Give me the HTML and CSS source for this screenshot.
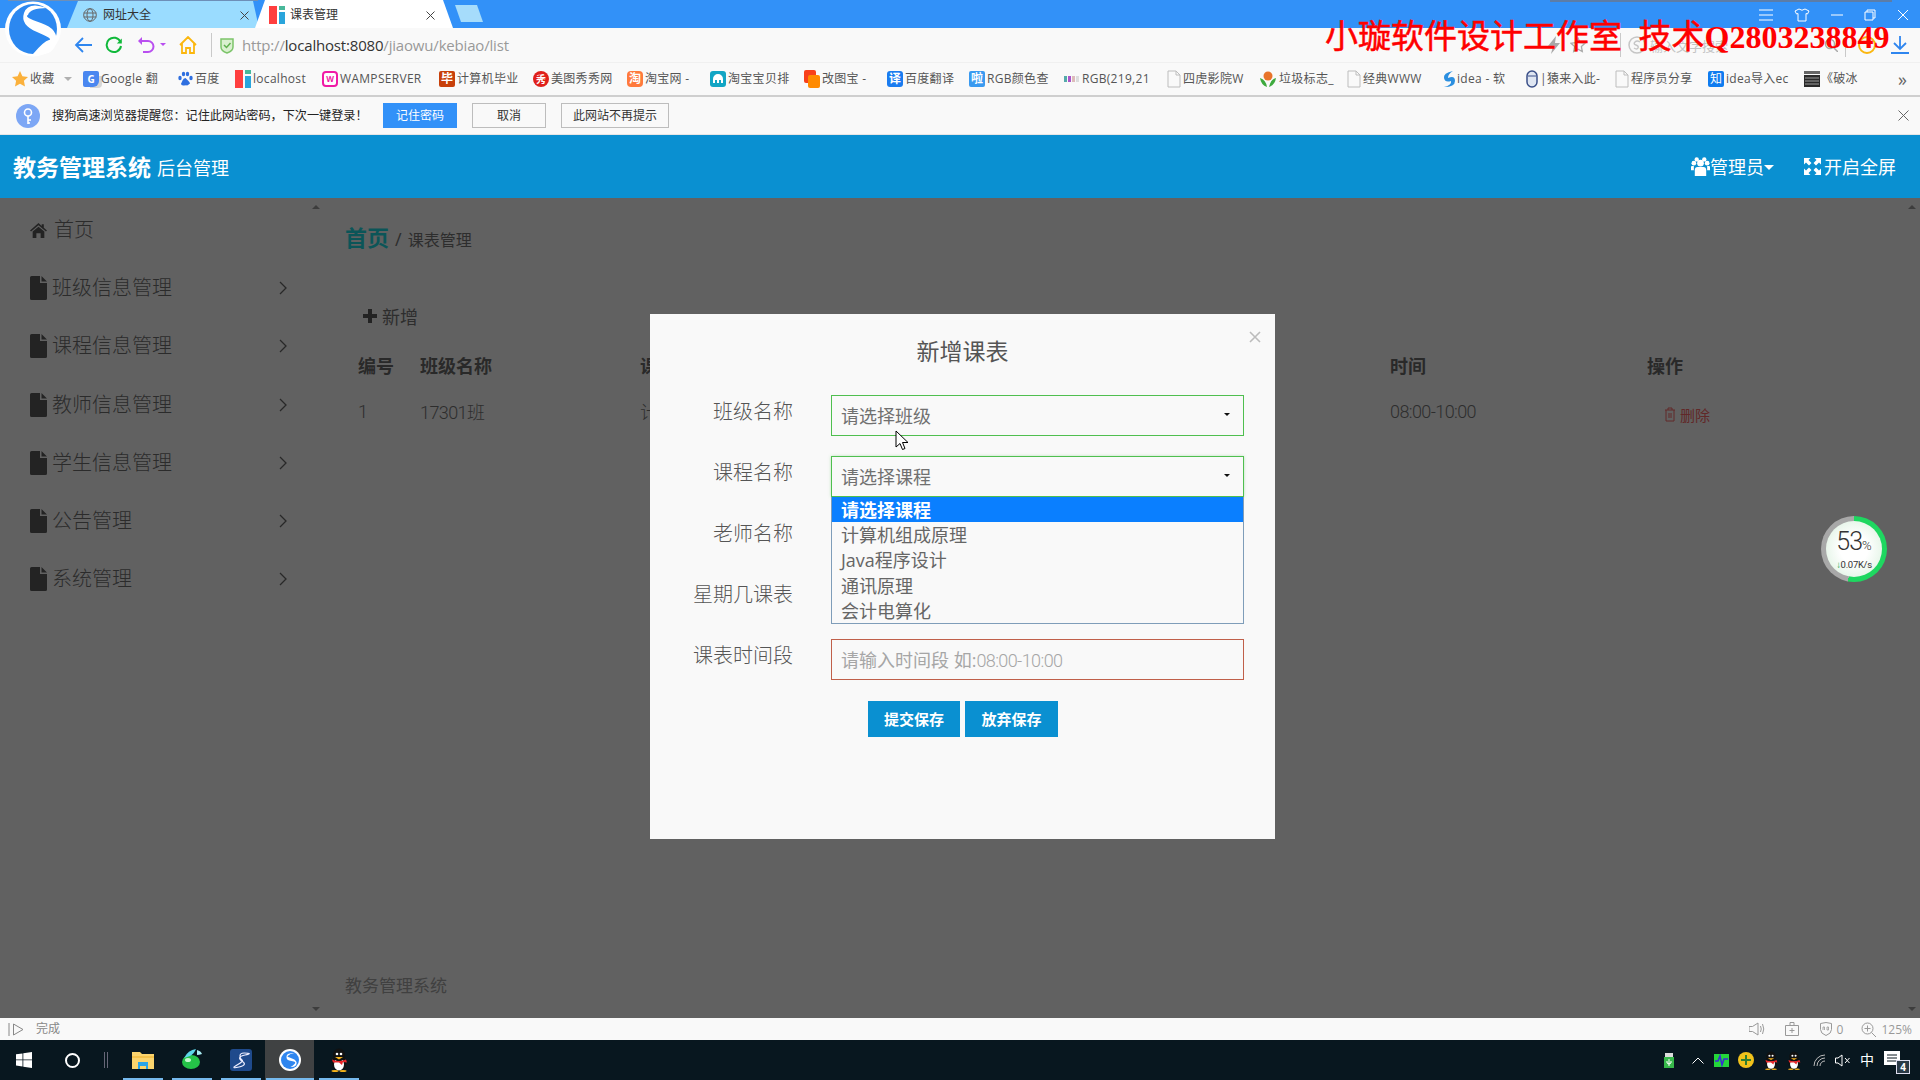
FILE: index.html
```html
<!DOCTYPE html>
<html lang="zh-CN">
<head>
<meta charset="utf-8">
<title>课表管理</title>
<link rel="stylesheet" href="styles.css">
</head>
<body>
<svg class="defs" width="0" height="0">
  <symbol id="lh" viewBox="0 0 16 18"><rect width="8" height="18" fill="#ff3f3f"/><rect x="10" y="6" width="6" height="12" fill="#2aa5dc"/><rect x="10" width="6" height="4" fill="#48b89a"/></symbol>
  <symbol id="doc" viewBox="0 0 14 18"><path d="M1 1h8l4 4v12H1z M9 1v4h4" fill="none" stroke="#bdbdbd"/></symbol>
  <symbol id="file" viewBox="0 0 17 24"><path d="M1.5 0H10v7h7v15.500a1.500 1.500 0 0 1-1.500 1.500h-14A1.500 1.500 0 0 1 0 22.500V1.500A1.500 1.500 0 0 1 1.500 0zM11.500 0 17 5.500h-5.500z" fill="#5e5e5e"/></symbol>
  <symbol id="chev" viewBox="0 0 8 14"><path d="M1 1l6 6-6 6" fill="none" stroke="#6a6a6a" stroke-width="1.300"/></symbol>
  <symbol id="qq" viewBox="0 0 20 24"><ellipse cx="10" cy="15" rx="7" ry="8" fill="#111"/><ellipse cx="10" cy="16.500" rx="5" ry="6" fill="#fff"/><ellipse cx="10" cy="7" rx="6" ry="6.500" fill="#111"/><circle cx="8" cy="6" r="1.300" fill="#fff"/><circle cx="12" cy="6" r="1.300" fill="#fff"/><path d="M6 9h8l-4 2.500z" fill="#f6b31a"/><path d="M3 11.500q7 3 14 0l1 3-4-.5-1 3-3-2.500-6 0z" fill="#e8262a"/><ellipse cx="6" cy="23" rx="3.500" ry="1" fill="#f6b31a"/><ellipse cx="14" cy="23" rx="3.500" ry="1" fill="#f6b31a"/></symbol>
</svg>
<div class="window">

  <div class="tabbar">
    <div class="tab tab-back">
      <svg class="tab-ico" width="14" height="14" viewBox="0 0 14 14"><g fill="none" stroke="#666"><circle cx="7" cy="7" r="6.300"/><ellipse cx="7" cy="7" rx="3" ry="6.300"/><path d="M.7 5h12.600M.7 9h12.600"/></g></svg>
      <span class="tab-title">网址大全</span>
      <svg class="tab-x" width="9" height="9" viewBox="0 0 9 9"><path d="M.5.500l8 8M8.500.500l-8 8" stroke="#444"/></svg>
    </div>
    <div class="tab tab-active">
      <svg class="tab-ico" width="16" height="18"><use href="#lh"/></svg>
      <span class="tab-title">课表管理</span>
      <svg class="tab-x" width="9" height="9" viewBox="0 0 9 9"><path d="M.5.500l8 8M8.500.500l-8 8" stroke="#444"/></svg>
    </div>
    <div class="tab-new"></div>
    <div class="win-ctrl">
      <svg width="14" height="12" viewBox="0 0 14 12"><path d="M0 1h14M0 6h14M0 11h14" stroke="#fff"/></svg>
      <svg width="16" height="14" viewBox="0 0 16 14"><path d="M5 1 1 3l1.500 3L4 5.500V13h8V5.500L13.500 6 15 3l-4-2q-3 2.500-6 0z" fill="none" stroke="#fff"/></svg>
      <svg width="12" height="12" viewBox="0 0 12 12"><path d="M0 6h12" stroke="#fff"/></svg>
      <svg width="12" height="12" viewBox="0 0 12 12"><path d="M3 3V1h8v8H9M1 3h8v8H1z" fill="none" stroke="#fff"/></svg>
      <svg width="12" height="12" viewBox="0 0 12 12"><path d="M1 1l10 10M11 1 1 11" stroke="#fff"/></svg>
    </div>
  </div>

  <div class="addrbar">
    <svg class="nav-back" width="18" height="18" viewBox="0 0 18 18"><path d="M9 2 2 9l7 7M2 9h16" fill="none" stroke="#2f86ef" stroke-width="1.800"/></svg>
    <svg class="nav-reload" width="18" height="18" viewBox="0 0 18 18"><path d="M15.500 6A7.200 7.200 0 1 0 16 10" fill="none" stroke="#10b93a" stroke-width="2"/><path d="M16.800 2.500v5h-5z" fill="#10b93a"/></svg>
    <svg class="nav-undo" width="33" height="18" viewBox="0 0 33 18"><path d="M4 5h7a5.500 5.500 0 0 1 0 11H6" fill="none" stroke="#b94ff0" stroke-width="2"/><path d="M5 1v8L1 5z" fill="#b94ff0"/><path d="M23 7h6l-3 3z" fill="#b94ff0"/></svg>
    <svg class="nav-home" width="18" height="18" viewBox="0 0 18 18"><path d="M1 9l8-8 8 8M3 7.500V17h4v-5h4v5h4V7.500" fill="none" stroke="#fbb70f" stroke-width="1.800"/></svg>
    <span class="addr-div"></span>
    <svg class="nav-shield" width="14" height="17" viewBox="0 0 14 17"><path d="M1 2h12v8q0 4-6 6-6-2-6-6z" fill="#d9f0cf" stroke="#7cc46a" stroke-width="1.500"/><path d="M4 8l2.500 2.500L10.500 6" fill="none" stroke="#5fb04e" stroke-width="1.500"/></svg>
    <span class="url">http://<b class="url-host">localhost:8080</b>/jiaowu/kebiao/list</span>
    <svg class="nav-bolt" width="14" height="18" viewBox="0 0 14 18"><path d="M9 0 1 10h5l-2 8 9-11H8z" fill="#a8a8a8"/></svg>
    <svg class="nav-star" width="16" height="16" viewBox="0 0 16 16"><path d="M8 1l2.100 4.600 4.900.6-3.600 3.400.9 5L8 12.200 3.700 14.600l.9-5L1 6.200l4.900-.6z" fill="none" stroke="#aaa" stroke-width="1.300"/></svg>
    <span class="addr-div addr-div-search"></span>
    <div class="search">
      <svg width="18" height="18" viewBox="0 0 18 18"><circle cx="9" cy="9" r="8" fill="none" stroke="#c6c6c6" stroke-width="1.500"/><path d="M12 6q-3-2-5 0t1 3 2 3-4 0" fill="none" stroke="#c6c6c6" stroke-width="1.500"/></svg>
      <span class="search-text">输入文字搜索</span>
    </div>
    <svg class="nav-mag" width="14" height="14" viewBox="0 0 14 14"><circle cx="6" cy="6" r="4.500" fill="none" stroke="#aaa" stroke-width="1.500"/><path d="M9.500 9.500 14 14" stroke="#aaa" stroke-width="1.500"/></svg>
    <span class="addr-div addr-div-end"></span>
    <span class="coin"></span>
    <svg class="nav-dl" width="18" height="18" viewBox="0 0 18 18"><path d="M9 0v12M3 7l6 6 6-6M0 17h18" fill="none" stroke="#2f86ef" stroke-width="1.800"/></svg>
  </div>

  <div class="bookmarks">
    <a class="bm"><svg width="16" height="16" viewBox="0 0 16 16"><path d="M8 0l2.400 5.200 5.600.7-4.100 3.900 1.100 5.700L8 12.700 3 15.500l1.100-5.700L0 5.900l5.600-.7z" fill="#fbb13c"/></svg><span class="bm-t">收藏</span><span class="bm-caret"></span></a>
    <a class="bm"><span class="fav fav-g">G</span><span class="bm-t">Google 翻</span></a>
    <a class="bm"><svg width="15" height="16" viewBox="0 0 15 16" fill="#2f6fe0"><ellipse cx="2" cy="7" rx="1.700" ry="2.300"/><ellipse cx="5.500" cy="3" rx="1.700" ry="2.300"/><ellipse cx="9.500" cy="3" rx="1.700" ry="2.300"/><ellipse cx="13" cy="7" rx="1.700" ry="2.300"/><path d="M7.500 7q-2 0-3 2.500t-1.500 3q0 2.500 3 2t3 0 3-2q0-1-1.500-2.500T7.500 7z"/></svg><span class="bm-t">百度</span></a>
    <a class="bm"><svg width="16" height="18"><use href="#lh"/></svg><span class="bm-t">localhost</span></a>
    <a class="bm"><span class="fav fav-w">W</span><span class="bm-t">WAMPSERVER</span></a>
    <a class="bm"><span class="fav fav-bi">毕</span><span class="bm-t">计算机毕业</span></a>
    <a class="bm"><span class="fav fav-xiu">秀</span><span class="bm-t">美图秀秀网</span></a>
    <a class="bm"><span class="fav fav-tao">淘</span><span class="bm-t">淘宝网 -</span></a>
    <a class="bm"><svg width="16" height="16" viewBox="0 0 16 16"><rect width="16" height="16" rx="3" fill="#12a5c4"/><path d="M3 12V8a5 5 0 0 1 10 0v4h-2V9H9v3H7V9H5v3z" fill="#fff"/></svg><span class="bm-t">淘宝宝贝排</span></a>
    <a class="bm"><svg width="16" height="18" viewBox="0 0 16 18"><rect width="12" height="13" rx="2" fill="#f8401a"/><rect x="4" y="5" width="12" height="13" rx="2" fill="#ff8a00"/></svg><span class="bm-t">改图宝 -</span></a>
    <a class="bm"><span class="fav fav-yi">译</span><span class="bm-t">百度翻译</span></a>
    <a class="bm"><span class="fav fav-la">啦</span><span class="bm-t">RGB颜色查</span></a>
    <a class="bm"><svg width="16" height="6" viewBox="0 0 16 6"><rect width="3" height="6" fill="#5aa"/><rect x="4" width="3" height="6" fill="#a5c"/><rect x="8" width="3" height="6" fill="#dbb"/><rect x="12" width="3" height="6" fill="#ddd"/></svg><span class="bm-t">RGB(219,21</span></a>
    <a class="bm"><svg width="14" height="18"><use href="#doc"/></svg><span class="bm-t">四虎影院W</span></a>
    <a class="bm"><svg width="18" height="18" viewBox="0 0 18 18"><circle cx="9" cy="6" r="4.500" fill="#e8742a"/><path d="M1 8q1 7 7 9-1-7-7-9zM17 8q-1 7-7 9 1-7 7-9z" fill="#3eaa3e"/></svg><span class="bm-t">垃圾标志_</span></a>
    <a class="bm"><svg width="14" height="18"><use href="#doc"/></svg><span class="bm-t">经典WWW</span></a>
    <a class="bm"><svg width="14" height="18" viewBox="0 0 14 18"><path d="M12 1Q2 3 3 8t7 3q1 4-7 6 11 0 11-6t-7-3q0-4 5-7z" fill="#2b8fe0"/></svg><span class="bm-t">idea - 软</span></a>
    <a class="bm"><svg width="12" height="18" viewBox="0 0 12 18"><rect x="1" y="1" width="10" height="16" rx="5" fill="#dfe6f2" stroke="#3a4f88" stroke-width="1.500"/><path d="M2 6h8" stroke="#3a4f88"/></svg><span class="bm-t">|猿来入此-</span></a>
    <a class="bm"><svg width="14" height="18"><use href="#doc"/></svg><span class="bm-t">程序员分享</span></a>
    <a class="bm"><span class="fav fav-zhi">知</span><span class="bm-t">idea导入ec</span></a>
    <a class="bm"><svg width="16" height="16" viewBox="0 0 16 16"><rect y="4" width="16" height="12" fill="#2a2a2a"/><rect y="0" width="16" height="3" fill="#666"/><path d="M1 7h14M1 10h14M1 13h14" stroke="#bbb" stroke-width=".8"/></svg><span class="bm-t bm-t-wide">《破冰</span></a>
    <a class="bm bm-more">»</a>
  </div>

  <div class="notify">
    <svg class="notify-ico" width="24" height="24" viewBox="0 0 24 24"><circle cx="12" cy="12" r="12" fill="#7da7f5"/><circle cx="12" cy="8.500" r="3.500" fill="none" stroke="#fff" stroke-width="1.600"/><path d="M12 12v8M12 16h3M12 19h2" stroke="#fff" stroke-width="1.600"/></svg>
    <span class="notify-text">搜狗高速浏览器提醒您：记住此网站密码，下次一键登录！</span>
    <button class="nb nb-primary">记住密码</button>
    <button class="nb nb-cancel">取消</button>
    <button class="nb nb-never">此网站不再提示</button>
    <svg class="notify-x" width="11" height="11" viewBox="0 0 11 11"><path d="M.5.500l10 10M10.500.500l-10 10" stroke="#666"/></svg>
  </div>

  <header class="apphead">
    <span class="brand">教务管理系统</span>
    <span class="brand-sub">后台管理</span>
    <div class="head-right">
      <svg class="ico-users" width="19" height="19" viewBox="0 0 20 20" fill="#fff"><circle cx="3" cy="6.500" r="2.500"/><circle cx="17" cy="6.500" r="2.500"/><circle cx="6" cy="2.500" r="2.300"/><circle cx="14" cy="2.500" r="2.300"/><circle cx="10" cy="6.500" r="3.500"/><path d="M4 20v-6q0-3.500 3-3.500h6q3 0 3 3.500v6z"/><path d="M0 14v-3.500q0-1 1-1h2V14zM20 14v-3.500q0-1-1-1h-2V14z"/></svg>
      <span class="head-link">管理员</span>
      <span class="head-caret"></span>
      <svg class="ico-full" width="17" height="17" viewBox="0 0 17 17" fill="#fff"><path d="M0 0h6.500L4.500 2l3 3L5 7.500l-3-3-2 2zM17 0v6.500l-2-2-3 3L9.500 5l3-3-2-2zM17 17h-6.500l2-2-3-3L12 9.500l3 3 2-2zM0 17v-6.500l2 2 3-3L7.500 12l-3 3 2 2z"/></svg>
      <span class="head-link">开启全屏</span>
    </div>
  </header>

  <div class="main">
    <aside class="sidebar">
      <a class="menu-item menu-home">
        <svg width="17" height="15" viewBox="0 0 16 14"><path d="M8 0 0 7l1 1 7-6 7 6 1-1-3-2.600V1h-2v1.700zM2.500 8 8 3.500 13.500 8v6H10V9.500H6V14H2.500z" fill="#5e5e5e"/></svg>
        <span class="menu-text">首页</span>
      </a>
      <a class="menu-item"><svg width="17" height="24"><use href="#file"/></svg><span class="menu-text">班级信息管理</span><svg class="chev" width="8" height="14"><use href="#chev"/></svg></a>
      <a class="menu-item"><svg width="17" height="24"><use href="#file"/></svg><span class="menu-text">课程信息管理</span><svg class="chev" width="8" height="14"><use href="#chev"/></svg></a>
      <a class="menu-item"><svg width="17" height="24"><use href="#file"/></svg><span class="menu-text">教师信息管理</span><svg class="chev" width="8" height="14"><use href="#chev"/></svg></a>
      <a class="menu-item"><svg width="17" height="24"><use href="#file"/></svg><span class="menu-text">学生信息管理</span><svg class="chev" width="8" height="14"><use href="#chev"/></svg></a>
      <a class="menu-item"><svg width="17" height="24"><use href="#file"/></svg><span class="menu-text">公告管理</span><svg class="chev" width="8" height="14"><use href="#chev"/></svg></a>
      <a class="menu-item"><svg width="17" height="24"><use href="#file"/></svg><span class="menu-text">系统管理</span><svg class="chev" width="8" height="14"><use href="#chev"/></svg></a>
    </aside>
    <div class="scrollbar"><span class="sb-up"></span><span class="sb-down"></span></div>

    <section class="content">
      <div class="crumb"><b class="crumb-home">首页</b><span class="crumb-sep">/</span><span class="crumb-cur">课表管理</span></div>
      <div class="add">
        <svg width="14" height="14" viewBox="0 0 14 14"><path d="M5 0h4v5h5v4H9v5H5V9H0V5h5z" fill="#5e5e5e"/></svg>
        <span>新增</span>
      </div>
      <table class="grid">
        <colgroup><col class="c-id"><col class="c-class"><col class="c-course"><col class="c-time"><col class="c-op"></colgroup>
        <thead><tr><th>编号</th><th>班级名称</th><th>课程名称</th><th>时间</th><th>操作</th></tr></thead>
        <tbody><tr>
          <td>1</td><td>17301班</td><td>计算机组成原理</td><td>08:00-10:00</td>
          <td><span class="del"><svg width="12" height="15" viewBox="0 0 12 15"><path d="M1 3h10M4 3V1h4v2M2 3v11h8V3M5 6v5M7 6v5" fill="none" stroke="#ff6a6a"/></svg>删除</span></td>
        </tr></tbody>
      </table>
      <footer class="foot">教务管理系统</footer>
    </section>
    <div class="scrollbar"><span class="sb-up"></span><span class="sb-down"></span></div>

    <div class="backdrop"></div>

    <div class="modal">
      <svg class="modal-x" width="12" height="12" viewBox="0 0 12 12"><path d="M1 1l10 10M11 1 1 11" stroke="#bcbcbc" stroke-width="1.600"/></svg>
      <h2 class="modal-title">新增课表</h2>
      <div class="form">
        <label class="lab">班级名称</label>
        <div class="sel"><span>请选择班级</span><i class="sel-caret"></i></div>
        <label class="lab">课程名称</label>
        <div class="sel sel-open"><span>请选择课程</span><i class="sel-caret"></i>
          <ul class="drop">
            <li class="opt opt-on">请选择课程</li>
            <li class="opt">计算机组成原理</li>
            <li class="opt">Java程序设计</li>
            <li class="opt">通讯原理</li>
            <li class="opt">会计电算化</li>
          </ul>
        </div>
        <label class="lab">老师名称</label>
        <div class="sel"></div>
        <label class="lab">星期几课表</label>
        <div class="sel"></div>
        <label class="lab">课表时间段</label>
        <div class="inp"><span>请输入时间段 如:<span class="ph-num">08:00-10:00</span></span></div>
      </div>
      <div class="actions">
        <button class="btn btn-a">提交保存</button>
        <button class="btn btn-b">放弃保存</button>
      </div>
    </div>

    <svg class="cursor" width="14" height="21" viewBox="0 0 14 21"><path d="M1 1v16l4-3.500 2.500 6 2.500-1-2.500-6H13z" fill="#fff" stroke="#000"/></svg>

    <div class="speed">
      <div class="speed-in">
        <div class="speed-pct">53<small>%</small></div>
        <div class="speed-net"><i class="speed-arr">↓</i>0.07K/s</div>
      </div>
    </div>
  </div>

  <div class="status">
    <svg class="st-play" width="16" height="13" viewBox="0 0 16 13"><path d="M1 0v13M5.500 1v11L15 6.500z" fill="none" stroke="#888"/></svg>
    <span class="st-text">完成</span>
    <div class="st-right">
      <svg width="16" height="14" viewBox="0 0 16 14"><path d="M0 4.500h3.500L9 1v12L3.500 9.500H0zM11.500 4q1.500 3 0 6M13.500 2q2.500 5 0 10" fill="none" stroke="#999"/></svg>
      <svg width="14" height="14" viewBox="0 0 14 14"><path d="M.5 3.500h13v10H.5zM5 3.500v-3h4v3M7 6v5M4.500 8.500h5" fill="none" stroke="#999"/></svg>
      <span class="st-ad"><svg width="12" height="14" viewBox="0 0 12 14"><path d="M.5 1.500 6 .5l5.500 1v6q0 4-5.500 6-5.500-2-5.500-6z" fill="none" stroke="#999"/><path d="M3 8V5h1.500v3M7 5v3h1.500V5z" fill="none" stroke="#999" stroke-width=".8"/></svg><span>0</span></span>
      <span class="st-zoom"><svg width="15" height="15" viewBox="0 0 15 15"><circle cx="6.500" cy="6.500" r="5.500" fill="none" stroke="#999"/><path d="M3.500 6.500h6M6.500 3.500v6M10.500 10.500 15 15" stroke="#999"/></svg><span>125%</span></span>
    </div>
  </div>

  <div class="taskbar">
    <div class="tb-start"><svg width="16" height="16" viewBox="0 0 16 16" fill="#fff"><path d="M0 2.300 6.500 1.400v6.100H0zM7.300 1.300 16 0v7.500H7.300zM0 8.300h6.500v6.200L0 13.600zM7.300 8.300H16V16l-8.700-1.300z"/></svg></div>
    <div class="tb-cortana"><span class="ring"></span></div>
    <div class="tb-sep"></div>
    <div class="tb-app tb-run"><svg width="22" height="20" viewBox="0 0 22 20"><path d="M0 2h8l2 2h12v15H0z" fill="#fbd46d"/><path d="M0 6h22v2H0z" fill="#f5c24a"/><path d="M6 12h10v7h-2v-3H8v3H6z" fill="#2aa4e8"/></svg></div>
    <div class="tb-app tb-run"><svg width="24" height="24" viewBox="0 0 24 24"><ellipse cx="11" cy="14" rx="9" ry="7" fill="#25c348"/><path d="M4 10Q8 2 16 1q-2 5-6 7z" fill="#5ed6e8"/><path d="M17 2q4 1 5 4-3 1-5 1z" fill="#a8ebf2"/><ellipse cx="8" cy="12" rx="3" ry="2" fill="#c5f7cf"/></svg></div>
    <div class="tb-app tb-run"><svg width="22" height="22" viewBox="0 0 22 22"><rect width="22" height="22" rx="3" fill="#1f4a8c"/><path d="M14 4q-4 0-4 3t2 4-5 5 2 2 3-6 3-6-1-2z" fill="none" stroke="#eef" stroke-width="1.200"/></svg></div>
    <div class="tb-app tb-run tb-active"><svg width="22" height="22" viewBox="0 0 22 22"><circle cx="11" cy="11" r="11" fill="#fff"/><circle cx="11" cy="11" r="9" fill="#2f86ef"/><path d="M15.500 4.500Q8 3.500 7.500 7.500t5 4.500 3 3-4 3q5 .5 6-3t-4.500-5.500-4.500-2.500 3-2z" fill="#fff"/></svg></div>
    <div class="tb-app tb-run"><svg width="20" height="24"><use href="#qq"/></svg></div>
    <div class="tray">
      <svg class="t-usb" width="10" height="15" viewBox="0 0 10 15"><rect y="4" width="10" height="11" fill="#37b84a"/><rect x="1" width="8" height="4" fill="#ddd"/><path d="M5 6v7M3 8v2l2 1 2-1V8" fill="none" stroke="#fff"/></svg>
      <svg class="t-up" width="12" height="7" viewBox="0 0 12 7"><path d="M.5 6.500 6 1l5.500 5.500" fill="none" stroke="#fff"/></svg>
      <svg class="t-item" width="15" height="13" viewBox="0 0 15 13"><rect width="15" height="13" fill="#24d63a"/><path d="M1 7h3l2-5 2 9 2-6h4" fill="none" stroke="#3a2ad6" stroke-width="1.500"/></svg>
      <svg class="t-item" width="16" height="16" viewBox="0 0 16 16"><circle cx="8" cy="8" r="8" fill="#f1c21b"/><path d="M7 3h2v4h4v2H9v4H7V9H3V7h4z" fill="#2f7d2f"/></svg>
      <svg class="t-qq" width="16" height="19"><use href="#qq"/></svg>
      <svg class="t-qq t-qq-last" width="16" height="19"><use href="#qq"/></svg>
      <svg class="t-item" width="13" height="13" viewBox="0 0 13 13"><path d="M1 12a11 11 0 0 1 11-11M4 12a8 8 0 0 1 8-8M7 12a5 5 0 0 1 5-5" fill="none" stroke="#bbb"/></svg>
      <svg class="t-item" width="15" height="13" viewBox="0 0 15 13"><path d="M.5 4h2.500L7 1v11L3 9H.5zM10 4l4.500 5M14.500 4 10 9" fill="none" stroke="#fff"/></svg>
      <span class="t-ime">中</span>
      <div class="t-note"><svg width="16" height="14" viewBox="0 0 16 14"><path d="M0 0h16v14H0z" fill="#fff"/><path d="M3 4h10M3 7h10M3 10h10" stroke="#08171f"/></svg><span class="t-badge">4</span></div>
    </div>
  </div>

  <svg class="sogou" width="58" height="56" viewBox="0 0 58 56"><ellipse cx="29" cy="28" rx="28" ry="27.500" fill="#fff"/><ellipse cx="29" cy="28" rx="24" ry="25" fill="#2c88f0"/><path d="M43 7Q24 0 20 12t13 19 12 8-16 14q20 3 23-11T37 22 24 14q2-7 19-7z" fill="#fff"/></svg>
  <div class="watermark"><span class="wm-cjk">小璇软件设计工作室&nbsp;&nbsp;技术</span>Q2803238849</div>
</div>
</body>
</html>
```

FILE: styles.css
```css
* { box-sizing: border-box; }
html, body { margin: 0; padding: 0; }
body {
  width: 1920px;
  height: 1080px;
  overflow: hidden;
  font-family: "Open Sans", "Noto Sans CJK SC", sans-serif;
  background: #fff;
}
.defs { position: absolute; }
.window {
  position: relative;
  width: 1920px;
  height: 1080px;
  display: flex;
  flex-direction: column;
}

/* tab strip */
.tabbar {
  height: 28px;
  flex: none;
  display: flex;
  align-items: stretch;
  padding-left: 67px;
  background:
    linear-gradient(#6d8fb8, #6d8fb8) 8px 0 / 250px 1px no-repeat,
    linear-gradient(#5c7da8, #5c7da8) 1550px 0 / 342px 2px no-repeat,
    #3291f8;
}
.tab {
  display: flex;
  align-items: center;
  height: 28px;
  padding-top: 2px;
  font-size: 12px;
  color: #333;
}
.tab-back {
  width: 192px;
  padding-left: 16px;
  background: #9adcff;
  clip-path: polygon(0 100%, 11px 1px, 186px 1px, 192px 100%);
}
.tab-active {
  width: 198px;
  margin-left: -4px;
  padding-left: 14px;
  background: #fff;
  clip-path: polygon(0 100%, 10px 0, 188px 0, 198px 100%);
}
.tab-ico { flex: none; margin-right: 5px; }
.tab-back .tab-ico { margin-right: 6px; }
.tab-title { line-height: 24px; width: 48px; white-space: nowrap; }
.tab-x { margin-left: 89px; flex: none; }
.tab-active .tab-x { margin-left: 88px; }
.tab-new {
  width: 28px;
  height: 17px;
  margin: 5px 0 0 2px;
  background: #a6dcfb;
  clip-path: polygon(0 0, 22px 0, 28px 100%, 6px 100%);
}
.win-ctrl {
  margin-left: auto;
  width: 160px;
  display: flex;
  align-items: center;
  justify-content: space-between;
  padding: 2px 10px 0 0;
  margin-right: 1px;
}

/* address bar */
.addrbar {
  height: 34px;
  flex: none;
  display: flex;
  align-items: center;
  padding: 0 11px 0 74px;
  background: #f9f9f9;
}
.nav-reload { margin-left: 13px; }
.nav-undo { margin-left: 14px; }
.nav-home { margin-left: 9px; }
.addr-div { width: 1px; height: 24px; background: #c9c9c9; margin-left: 14px; flex: none; }
.nav-shield { margin-left: 8px; }
.url {
  margin-left: 8px;
  font-size: 15px;
  line-height: 20px;
  letter-spacing: -.18px;
  color: #999;
  white-space: nowrap;
  font-weight: 400;
}
.url-host { color: #333; font-weight: 400; }
.nav-bolt { margin-left: auto; }
.nav-star { margin-left: 9px; }
.addr-div-search { margin-left: 34px; }
.search {
  margin-left: 7px;
  width: 196px;
  display: flex;
  align-items: center;
  gap: 4px;
}
.search-text { font-size: 13px; color: #c4c4c4; white-space: nowrap; }
.addr-div-end { margin-left: 7px; height: 24px; }
.coin {
  width: 18px;
  height: 18px;
  margin-left: 12px;
  border: 2px solid #fbb70f;
  border-radius: 50%;
  flex: none;
}
.nav-dl { margin-left: 15px; }

/* bookmarks */
.bookmarks {
  height: 35px;
  flex: none;
  display: grid;
  grid-template-columns: 71px 95px 57px 87px 117px 94px 94px 83px 94px 83px 82px 95px 103px 92px 88px 94px 85px 89px 93px 96px 94px 20px;
  padding-left: 12px;
  align-items: center;
  background: #f9f9f9;
  border-top: 1px solid #f0f0f0;
  border-bottom: 2px solid #cfcfcf;
}
.bm {
  display: flex;
  align-items: center;
  gap: 2px;
  min-width: 0;
  font-size: 12px;
  line-height: 18px;
  color: #555;
  white-space: nowrap;
  letter-spacing: .3px;
}
.bm svg { flex: none; }
.bm-t-wide { margin-left: -1px; }
.bm-caret {
  width: 0;
  height: 0;
  margin-left: 7px;
  border: 4px solid transparent;
  border-top-color: #b0b0b0;
  border-bottom: 0;
}
.bm-more { font-size: 18px; color: #666; letter-spacing: 0; }
.fav {
  width: 16px;
  height: 16px;
  flex: none;
  display: flex;
  align-items: center;
  justify-content: center;
  font-size: 12px;
  line-height: 16px;
  letter-spacing: 0;
  color: #fff;
  font-weight: 700;
  border-radius: 2px;
}
.fav-g { background: #4a87f0; font-size: 10px; border-radius: 2px 2px 6px 2px; box-shadow: 5px 3px 0 -2px #d6d6d6; }
.fav-w { background: #fff; color: #f01aa6; border: 2px solid #f01aa6; font-size: 8px; border-radius: 4px; }
.fav-bi { background: #c8400a; }
.fav-xiu { background: #e0201a; border-radius: 50%; font-size: 10px; }
.fav-tao { background: #ff7a3c; border-radius: 4px; }
.fav-yi { background: #1a7cf0; border-radius: 3px; }
.fav-la { background: #3a9af0; }
.fav-zhi { background: #0f7cf0; font-weight: 400; }

/* prompt bar */
.notify {
  height: 38px;
  flex: none;
  display: flex;
  align-items: center;
  padding: 0 11px 0 16px;
  background: #f9f9f9;
  border-bottom: 1px solid #e6e6e6;
}
.notify-ico { flex: none; margin-right: 12px; }
.notify-text {
  width: 331px;
  font-size: 12.150px;
  line-height: 18px;
  color: #222;
  white-space: nowrap;
}
.nb {
  height: 25px;
  padding: 0;
  font-family: inherit;
  font-size: 12px;
  line-height: 23px;
  background: #f9f9f9;
  color: #333;
  border: 1px solid #bdbdbd;
}
.nb-primary { width: 74px; background: #3291f8; color: #fff; border-color: #3291f8; }
.nb-cancel { width: 74px; margin-left: 15px; }
.nb-never { width: 108px; margin-left: 15px; }
.notify-x { margin-left: auto; }

/* app header */
.apphead {
  height: 63px;
  flex: none;
  display: flex;
  align-items: center;
  padding: 0 24px 0 13px;
  background: #0a90d1;
  color: #fff;
}
.brand { font-size: 23px; font-weight: 700; line-height: 30px; }
.brand-sub { font-size: 18px; line-height: 30px; margin: 2px 0 0 6px; }
.head-right { margin-left: auto; display: flex; align-items: center; }
.head-link { font-size: 18px; line-height: 24px; white-space: nowrap; }
.head-caret {
  width: 0;
  height: 0;
  margin: 2px 0 0 0;
  border: 5.500px solid transparent;
  border-top-color: #fff;
  border-bottom: 0;
}
.ico-full { margin: 0 3px 0 30px; }

/* main */
.main {
  position: relative;
  flex: 1;
  min-height: 0;
  display: flex;
  background: #fff;
}
.sidebar {
  width: 307px;
  flex: none;
  padding-top: 3px;
  display: flex;
  flex-direction: column;
}
.menu-item {
  height: 58.170px;
  display: flex;
  align-items: center;
  padding: 0 20px 0 30px;
  color: #727272;
}
.menu-text { font-size: 20px; line-height: 28px; margin-left: 5px; white-space: nowrap; font-weight: 300; }
.menu-home .menu-text { margin-left: 7px; }
.chev { margin-left: auto; }
.scrollbar {
  width: 17px;
  flex: none;
  display: flex;
  flex-direction: column;
  justify-content: space-between;
  align-items: center;
  padding: 7px 0 7px;
}
.sb-up, .sb-down { width: 0; height: 0; border: 4.500px solid transparent; }
.sb-up { border-bottom-color: #a0a0a0; border-top: 0; }
.sb-down { border-top-color: #a0a0a0; border-bottom: 0; }
.content {
  flex: 1;
  min-width: 0;
  padding: 24px 0 0 23px;
  display: flex;
  flex-direction: column;
}
.crumb { display: flex; align-items: baseline; height: 30px; margin-left: -2px; white-space: nowrap; }
.crumb-home { font-size: 22px; line-height: 30px; font-weight: 700; color: #1fe0e6; }
.crumb-sep { font-size: 18px; color: #777; margin: 0 6px 0 6px; }
.crumb-cur { font-size: 16px; color: #777; }
.add {
  margin: 49px 0 0 16px;
  height: 30px;
  display: flex;
  align-items: center;
  gap: 5px;
  font-size: 18px;
  color: #787878;
}
.grid {
  margin: 11px 0 0 11px;
  width: 1542px;
  table-layout: fixed;
  border-collapse: collapse;
}
.c-id { width: 62px; }
.c-class { width: 220px; }
.c-course { width: 750px; }
.c-time { width: 257px; }
.grid th, .grid td { padding: 0; text-align: left; font-size: 18px; white-space: nowrap; }
.grid th { height: 46px; font-weight: 700; color: #6c6c6c; }
.grid td { height: 46px; color: #787878; font-family: "Roboto", "Noto Sans CJK SC", sans-serif; font-weight: 300; letter-spacing: -.6px; }
.del {
  display: inline-flex;
  align-items: center;
  gap: 4px;
  padding: 8px 0 0 17px;
  font-family: "Noto Sans CJK SC", sans-serif;
  font-size: 15px;
  letter-spacing: 0;
  color: #ff6a6a;
  font-weight: 400;
}
.foot {
  margin: auto 0 20px -2px;
  font-size: 17px;
  line-height: 24px;
  color: #a8a8a8;
}
.backdrop {
  position: absolute;
  inset: 0;
  background: rgba(0, 0, 0, .62);
}

/* modal */
.modal {
  position: absolute;
  left: 650px;
  top: 116px;
  width: 625px;
  height: 525px;
  padding-top: 22px;
  background: #f9f9f9;
}
.modal-x { position: absolute; left: 599px; top: 17px; }
.modal-title {
  margin: 0;
  font-size: 23px;
  line-height: 30px;
  font-weight: 400;
  text-align: center;
  color: #555;
}
.form {
  margin-top: 29px;
  display: grid;
  grid-template-columns: 143px 413px;
  column-gap: 38px;
  row-gap: 20px;
}
.lab {
  font-size: 20px;
  line-height: 34px;
  color: #555;
  text-align: right;
  white-space: nowrap;
  font-weight: 300;
}
.sel, .inp {
  position: relative;
  height: 41px;
  padding: 0 0 2px 9px;
  display: flex;
  align-items: center;
  font-size: 18px;
  color: #707070;
  background: #f9f9f9;
  border: 1px solid #4fbf4f;
}
.sel-open { box-shadow: 0 0 3px rgba(79, 191, 79, .35); }
.inp { border-color: #c0604a; color: #a6a6a6; white-space: nowrap; }
.ph-num { font-family: "Roboto", sans-serif; font-weight: 300; letter-spacing: -.6px; }
.sel-caret {
  position: absolute;
  right: 13px;
  top: 17px;
  width: 0;
  height: 0;
  border: 3px solid transparent;
  border-top: 3px solid #111;
  border-bottom: 0;
}
.drop {
  position: absolute;
  left: -1px;
  top: calc(100% + 1px);
  width: 413px;
  margin: 0;
  padding: 0;
  list-style: none;
  background: #f9f9f9;
  border: 1px solid #7f9db9;
  border-top: 0;
  z-index: 2;
}
.opt { height: 25.200px; padding-left: 9px; font-size: 18px; line-height: 27px; color: #666; white-space: nowrap; overflow: hidden; }
.opt-on { background: #0a7fff; color: #fff; font-weight: 700; }
.actions { margin-top: 21px; padding-left: 218px; display: flex; gap: 5px; }
.btn {
  height: 36px;
  padding: 0 0 2px;
  border: 0;
  background: #0a90d1;
  color: #fff;
  font-family: inherit;
  font-size: 15px;
  font-weight: 700;
}
.btn-a { width: 92px; }
.btn-b { width: 93px; }
.cursor { position: absolute; left: 895px; top: 232px; }

/* speed ball */
.speed {
  position: absolute;
  left: 1821px;
  top: 318px;
  width: 66px;
  height: 66px;
  padding: 5px;
  border-radius: 50%;
  background: conic-gradient(#1ed760 0 53%, #a8a8a8 53% 100%);
}
.speed-in {
  width: 56px;
  height: 56px;
  border-radius: 50%;
  background: radial-gradient(circle, #fff 35%, #d6efda 100%);
  text-align: center;
  color: #333;
  padding-top: 7px;
}
.speed-pct { font-size: 25px; line-height: 28px; font-weight: 300; font-family: "Roboto", sans-serif; letter-spacing: -1px; }
.speed-pct small { font-size: 13px; letter-spacing: 0; }
.speed-net { font-size: 9.500px; line-height: 10px; white-space: nowrap; font-family: "Roboto", sans-serif; letter-spacing: -.3px; }
.speed-arr { color: #12a84a; font-style: normal; font-weight: 700; }

/* status bar */
.status {
  height: 22px;
  flex: none;
  display: flex;
  align-items: center;
  padding: 0 8px 0 8px;
  background: #f9f9f9;
}
.st-play { flex: none; }
.st-text { margin-left: 12px; font-size: 12px; line-height: 18px; color: #888; }
.st-right { margin-left: auto; display: flex; align-items: center; font-size: 12px; color: #999; }
.st-ad { margin-left: 21px; display: flex; align-items: center; gap: 5px; }
.st-zoom { margin-left: 18px; display: flex; align-items: center; gap: 5px; }
.st-right > svg + svg { margin-left: 20px; }

/* taskbar */
.taskbar {
  height: 40px;
  flex: none;
  display: flex;
  align-items: center;
  background: #08171f;
}
.tb-start, .tb-cortana { width: 48px; height: 40px; display: flex; align-items: center; justify-content: center; flex: none; }
.ring { width: 15px; height: 15px; border: 2px solid #fff; border-radius: 50%; }
.tb-sep { width: 22px; height: 16px; flex: none; background: linear-gradient(#667, #667) 8px 0 / 1px 100% no-repeat, linear-gradient(#667, #667) 11px 0 / 1px 100% no-repeat; }
.tb-app { width: 49px; height: 40px; flex: none; display: flex; align-items: center; justify-content: center; position: relative; }
.tb-run { background: linear-gradient(#76b9ed, #76b9ed) center bottom / 40px 2px no-repeat; }
.tb-active { background: linear-gradient(#76b9ed, #76b9ed) center bottom / 48px 2px no-repeat, #404243; }
.tray { margin-left: auto; display: flex; align-items: center; height: 40px; padding-right: 14px; }
.t-usb { margin-right: 18px; }
.t-up { margin-right: 10px; }
.t-item { margin-right: 9px; }
.t-qq { margin-right: 7px; }
.t-qq-last { margin-right: 11px; }
.t-ime { color: #fff; font-size: 14px; line-height: 20px; margin: 0 10px 0 1px; }
.t-note { position: relative; width: 22px; height: 24px; display: flex; align-items: flex-start; padding-top: 3px; }
.t-badge {
  position: absolute;
  right: -4px;
  bottom: -2px;
  width: 14px;
  height: 14px;
  font-size: 10px;
  line-height: 12px;
  text-align: center;
  color: #fff;
  background: #2a3a46;
  border: 1px solid #dde;
  font-weight: 700;
}

/* over the browser chrome */
.sogou { position: absolute; left: 4px; top: 1px; }
.watermark {
  position: absolute;
  left: 1325px;
  top: 16px;
  font-family: "Liberation Serif", "Noto Sans CJK SC", serif;
  font-size: 32px;
  line-height: 42px;
  font-weight: 700;
  color: #ff0000;
  white-space: nowrap;
}
.wm-cjk { font-size: 33px; font-weight: 400; -webkit-text-stroke: .5px #ff0000; }
```
